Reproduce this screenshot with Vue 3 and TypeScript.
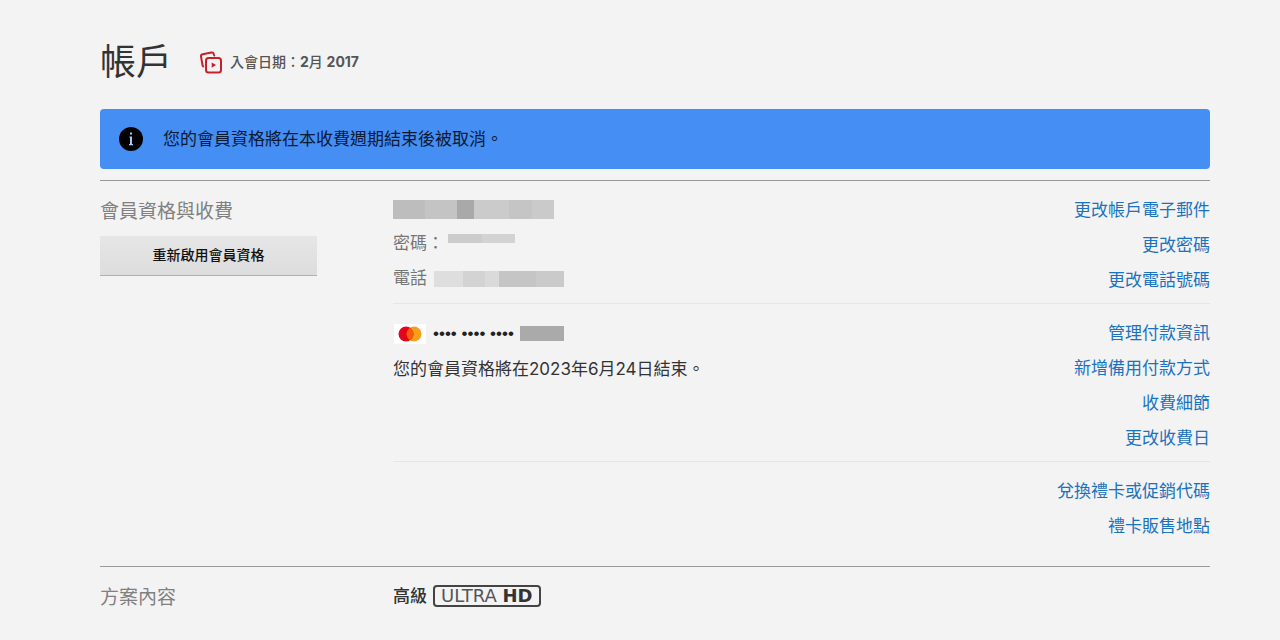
<script setup lang="ts">
interface LinkGroup {
  id: string
  links: string[]
}

const groups: LinkGroup[] = [
  { id: 'identity', links: ['更改帳戶電子郵件', '更改密碼', '更改電話號碼'] },
  { id: 'payment', links: ['管理付款資訊', '新增備用付款方式', '收費細節', '更改收費日'] },
  { id: 'gift', links: ['兌換禮卡或促銷代碼', '禮卡販售地點'] },
]
</script>

<template>
  <main class="account">
    <header class="head">
      <h1>帳戶</h1>
      <p class="since">
        <svg class="since-icon" viewBox="0 0 24 24" aria-hidden="true">
          <g fill="none" stroke="#c8202b" stroke-width="2" stroke-linejoin="round" stroke-linecap="round">
            <path d="M4.200 16.500 3.600 15.500 2 6.500a2 2 0 0 1 1.600-2.300L12.500 2.600a2 2 0 0 1 2.300 1.600L15.200 5.600" />
            <rect x="7" y="8" width="15" height="14.500" rx="2.500" />
          </g>
          <path d="M12.700 12.500v5.200l4.400-2.600z" fill="#c8202b" />
        </svg>
        <span>入會日期：<b>2</b>月 <b>2017</b></span>
      </p>
    </header>

    <div class="notice" role="status">
      <svg class="notice-icon" viewBox="0 0 24 24" aria-hidden="true">
        <circle cx="12" cy="12" r="12" fill="#000" />
        <g fill="#a9c8f5">
          <rect x="11" y="5.500" width="2" height="2" />
          <path d="M10.500 9.500H13V17h1v1.200h-4V17h1v-6.300h-.5z" />
        </g>
      </svg>
      <span>您的會員資格將在本收費週期結束後被取消。</span>
    </div>

    <section class="section">
      <div class="side">
        <h2>會員資格與收費</h2>
        <button type="button" class="restart">重新啟用會員資格</button>
      </div>
      <div class="body">
        <div v-for="group in groups" :key="group.id" class="group">
          <div v-if="group.id === 'identity'" class="info muted">
            <div class="row first"><span class="mask email"></span></div>
            <div class="row">密碼：<span class="mask password"></span></div>
            <div class="row">電話<span class="mask phone"></span></div>
          </div>
          <div v-else-if="group.id === 'payment'" class="info">
            <div class="row card-row">
              <svg class="card" viewBox="0 0 32 20" role="img" aria-label="Mastercard">
                <rect width="32" height="20" rx="1" fill="#fff" />
                <circle cx="20" cy="10" r="7.500" fill="#f79e1b" />
                <circle cx="12" cy="10" r="7.500" fill="#e3051b" />
                <path d="M16 3.660a7.500 7.500 0 0 1 0 12.680a7.500 7.500 0 0 1 0-12.680z" fill="#f45b0a" />
              </svg>
              <span class="dots">•••• •••• ••••</span>
              <span class="mask digits"></span>
            </div>
            <div class="row ends">您的會員資格將在2023年6月24日結束。</div>
          </div>
          <div v-else class="info"></div>
          <ul class="links">
            <li v-for="link in group.links" :key="link"><a href="#">{{ link }}</a></li>
          </ul>
        </div>
      </div>
    </section>

    <section class="section plan">
      <div class="side"><h2>方案內容</h2></div>
      <div class="body plan-body">
        <b class="tier">高級</b>
        <span class="uhd">ULTRA <b>HD</b></span>
      </div>
    </section>
  </main>
</template>

<style>
body {
  margin: 0;
  background: #f3f3f3;
}
</style>

<style scoped>
.account {
  padding: 37px 70px 0 100px;
  font-family: Inter, "Noto Sans CJK TC", sans-serif;
  font-size: 17px;
  line-height: 35px;
  color: #333;
}
.head {
  display: flex;
  align-items: center;
  gap: 27px;
  height: 50px;
  margin-bottom: 22px;
}
h1 {
  margin: 0;
  font-size: 36px;
  line-height: 50px;
  font-weight: 400;
}
.since {
  display: flex;
  align-items: center;
  gap: 7px;
  margin: 0;
  font-size: 14px;
  line-height: 24px;
  font-weight: 500;
  color: #555;
}
.since b {
  font-weight: 700;
}
.since-icon {
  width: 24px;
  height: 24px;
}
.notice {
  display: flex;
  align-items: center;
  gap: 20px;
  height: 60px;
  padding: 0 19px;
  margin-bottom: 11px;
  border-radius: 4px;
  background: #448ef4;
  color: #0b1a33;
}
.notice-icon {
  width: 24px;
  height: 24px;
}
.section {
  display: grid;
  grid-template-columns: 217px 1fr;
  column-gap: 76px;
  padding: 12px 0 22px;
  border-top: 1px solid #999;
}
h2 {
  margin: 0;
  font-size: 19px;
  line-height: 37px;
  font-weight: 400;
  color: #808080;
}
.restart {
  display: block;
  width: 100%;
  height: 40px;
  margin-top: 6px;
  border: 0;
  border-bottom: 1px solid #b0b0b0;
  padding: 0 0 2px;
  background: linear-gradient(#e6e6e6, #dddddd);
  color: #111;
  font: inherit;
  font-size: 14px;
  font-weight: 500;
  line-height: 20px;
}
.group {
  display: flex;
  justify-content: space-between;
}
.group + .group {
  margin-top: 5px;
  padding-top: 12px;
  border-top: 1px solid #e6e6e6;
}
.row {
  display: flex;
  align-items: center;
  height: 35px;
}
.first {
  height: 33px;
}
.ends {
  height: 37px;
}
.muted {
  color: #767676;
}
.mask {
  display: block;
}
.email {
  width: 161px;
  height: 19px;
  background: linear-gradient(90deg, #bdbdbd 32px, #c4c4c4 32px 64px, #a9a9a9 64px 81px, #cbcbcb 81px 116px, #c5c5c5 116px 139px, #cacaca 139px);
}
.password {
  width: 67px;
  height: 9px;
  margin: 0 0 10px 4px;
  background: linear-gradient(90deg, #cccccc 34px, #d3d3d3 34px);
}
.phone {
  width: 130px;
  height: 16px;
  margin-left: 7px;
  background: linear-gradient(90deg, #dedede 29px, #d3d3d3 29px 51px, #dadada 51px 65px, #c5c5c5 65px 102px, #cacaca 102px);
}
.card {
  width: 32px;
  height: 20px;
}
.card-row {
  padding-left: 1px;
}
.dots {
  margin-left: 7px;
  font-family: "Liberation Sans", Arial, sans-serif;
  color: #222;
}
.digits {
  width: 44px;
  height: 15px;
  margin-left: 6px;
  background: #aaa;
}
.links {
  margin: 0;
  padding: 0;
  list-style: none;
  text-align: right;
}
.links li {
  height: 35px;
}
.links a {
  color: #1b72bf;
  text-decoration: none;
}
.plan-body {
  display: flex;
  align-items: center;
  gap: 6px;
  height: 34px;
}
.tier {
  font-weight: 500;
}
.uhd {
  border: 2px solid #444;
  border-radius: 4px;
  padding: 0 6px;
  font-family: "DejaVu Sans", sans-serif;
  font-size: 18px;
  line-height: 18px;
  color: #555;
}
.uhd b {
  font-weight: 700;
  color: #333;
}
</style>
